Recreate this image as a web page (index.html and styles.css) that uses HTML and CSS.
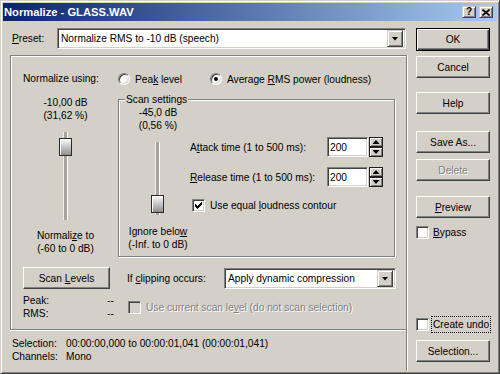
FILE: index.html
```html
<!DOCTYPE html>
<html>
<head>
<meta charset="utf-8">
<title>Normalize</title>
<link rel="stylesheet" href="styles.css">
</head>
<body>
<div class="window">
  <div class="titlebar">
    <span class="title">Normalize - GLASS.WAV</span>
    <div class="tbuttons">
      <span class="tbtn"><span class="qmark">?</span></span>
      <span class="tbtn"><svg width="8" height="7" viewBox="0 0 8 7"><path d="M0.5 0.5 L7.5 6.5 M7.5 0.5 L0.5 6.5" stroke="#000" stroke-width="1.6" fill="none"/></svg></span>
    </div>
  </div>
  <div class="body">
    <div class="main">
      <div class="preset-row">
        <span class="preset-label"><u>P</u>reset:</span>
        <div class="combo preset-combo">
          <span class="combo-text">Normalize RMS to -10 dB (speech)</span>
          <span class="ddbtn"></span>
        </div>
      </div>
      <div class="lower">
        <div class="panel">
          <div class="using-label">Normalize using:</div>
          <div class="radios">
            <div class="radio-opt first"><span class="radio"></span><span>Pea<u>k</u> level</span></div>
            <div class="radio-opt"><span class="radio on"></span><span>Average <u>R</u>MS power (loudness)</span></div>
          </div>

          <div class="level-col">
            <div>-10,00 dB</div>
            <div>(31,62 %)</div>
            <div class="slider s1"><span class="track"></span><span class="thumb t1"></span></div>
            <div class="after-slider">Normali<u>z</u>e to</div>
            <div>(-60 to 0 dB)</div>
          </div>
          <fieldset class="scan">
            <legend>Scan settings</legend>
            <div class="scan-inner">
              <div class="colA">
                <div>-45,0 dB</div>
                <div>(0,56 %)</div>
                <div class="slider s2"><span class="track"></span><span class="thumb t2"></span></div>
                <div class="after-slider">Ignore belo<u>w</u></div>
                <div>(-Inf. to 0 dB)</div>
              </div>
              <div class="colB">
                <div class="spinrow">
                  <span class="spin-label">A<u>t</u>tack time (1 to 500 ms):</span>
                  <span class="tb">200</span>
                  <span class="spin"><span class="sbtn up"></span><span class="sbtn down"></span></span>
                </div>
                <div class="spinrow second">
                  <span class="spin-label"><u>R</u>elease time (1 to 500 ms):</span>
                  <span class="tb">200</span>
                  <span class="spin"><span class="sbtn up"></span><span class="sbtn down"></span></span>
                </div>
                <div class="chk loud">
                  <span class="cb"><svg width="7" height="7" viewBox="0 0 7 7"><path d="M0 2h1v1h1v1h1V3h1V2h1V1h1V0h1v3H6v1H5v1H4v1H3v1H2V6H1V5H0z" fill="#000"/></svg></span>
                  <span>Use equal <u>l</u>oudness contour</span>
                </div>
              </div>
            </div>
          </fieldset>

          <div class="scan-btn-cell"><span class="btn scan-btn"><span>Scan <u>L</u>evels</span></span></div>
          <div class="clip-row">
            <span class="clip-label">If <u>c</u>lipping occurs:</span>
            <div class="combo clip-combo">
              <span class="combo-text">Apply dynamic compression</span>
              <span class="ddbtn"></span>
            </div>
          </div>

          <div class="levels">
            <span>Peak:</span><span>--</span>
            <span>RMS:</span><span>--</span>
          </div>
          <div class="chk disabled use-current">
            <span class="cb off"></span>
            <span>Use current scan le<u>v</u>el (do not scan selection)</span>
          </div>
        </div>
        <div class="info">
          <span>Selection:</span><span>00:00:00,000 to 00:00:01,041 (00:00:01,041)</span>
          <span>Channels:</span><span>Mono</span>
        </div>
      </div>
    </div>
    <div class="side">
      <span class="btn default"><span>OK</span></span>
      <span class="btn cancel"><span>Cancel</span></span>
      <span class="btn help"><span>Help</span></span>
      <span class="btn save"><span>Save As...</span></span>
      <span class="btn disabled delete"><span>Delete</span></span>
      <span class="btn preview"><span><u>P</u>review</span></span>
      <div class="chk bypass"><span class="cb"></span><span><u>B</u>ypass</span></div>
      <div class="chk undo"><span class="cb"></span><span class="focus">Create undo</span></div>
      <span class="btn selection"><span>Selection...</span></span>
    </div>
  </div>
</div>
</body>
</html>
```

FILE: styles.css
```css
* { box-sizing: border-box; }
html, body { margin: 0; padding: 0; }
body {
  font-family: "Liberation Sans", Arial, sans-serif;
  font-size: 10.2px;
  line-height: 13px;
  color: #000;
  background: #d4d0c8;
}
u { text-decoration: underline; text-underline-offset: 1px; }

.window {
  width: 500px;
  height: 374px;
  background: #d4d0c8;
  border: 1px solid;
  border-color: #d4d0c8 #404040 #404040 #d4d0c8;
  box-shadow: inset 1px 1px #fff, inset -1px -1px #808080;
  padding: 2px;
  display: flex;
  flex-direction: column;
}

.titlebar {
  height: 18px;
  flex: none;
  background: linear-gradient(to right, #0a246a, #a6caf0);
  display: flex;
  align-items: center;
  padding: 0 4px 0 1px;
}
.title {
  flex: 1;
  color: #fff;
  font-weight: bold;
  font-size: 11.2px;
}
.tbuttons { display: flex; gap: 3px; }
.tbtn {
  width: 14px;
  height: 12px;
  background: #d4d0c8;
  border: 1px solid;
  border-color: #d4d0c8 #404040 #404040 #d4d0c8;
  box-shadow: inset 1px 1px #fff, inset -1px -1px #808080;
  display: flex;
  align-items: center;
  justify-content: center;
}
.qmark { font-weight: bold; font-size: 10px; line-height: 10px; }

.body {
  flex: 1;
  min-height: 0;
  display: grid;
  grid-template-columns: 397px 1fr;
  grid-template-rows: 100%;
  padding: 7px 8px 0 7px;
}

.main { display: flex; flex-direction: column; min-height: 0; }
.preset-row { display: flex; align-items: center; height: 21px; flex: none; }
.preset-label { width: 47px; padding-left: 2px; }

.combo {
  height: 21px;
  background: #fff;
  border: 1px solid;
  border-color: #808080 #fff #fff #808080;
  box-shadow: inset 1px 1px #404040, inset -1px -1px #d4d0c8;
  display: flex;
  align-items: center;
  padding: 2px 2px 2px 3px;
}
.preset-combo { width: 349px; }
.combo-text { flex: 1; white-space: nowrap; overflow: hidden; }
.ddbtn {
  width: 16px;
  height: 17px;
  flex: none;
  background: #d4d0c8;
  border: 1px solid;
  border-color: #d4d0c8 #404040 #404040 #d4d0c8;
  box-shadow: inset 1px 1px #fff, inset -1px -1px #808080;
  display: flex;
  align-items: center;
  justify-content: center;
}
.ddbtn::after {
  content: "";
  width: 7px;
  height: 4px;
  background: #000;
  clip-path: polygon(0 0, 100% 0, 50% 100%);
}

.lower {
  flex: 1;
  margin-top: 6px;
  border-right: 1px solid #808080;
  box-shadow: 1px 0 #fff;
  display: flex;
  flex-direction: column;
}

.panel {
  border: 1px solid #808080;
  border-right: none;
  box-shadow: inset 1px 1px #fff, 0 1px #fff;
  padding: 16px 0 9px 12px;
  display: grid;
  grid-template-columns: 87px 278px;
  column-gap: 8px;
  align-items: start;
}

.using-label { height: 14px; }
.radios { display: flex; align-items: center; height: 14px; }
.radio-opt { display: flex; align-items: center; gap: 5px; white-space: nowrap; }
.radio-opt.first { width: 92px; }
.radio {
  width: 12px;
  height: 12px;
  flex: none;
  border-radius: 50%;
  background: #fff;
  border: 1px solid;
  border-color: #808080 #fff #fff #808080;
  box-shadow: inset 1px 1px #404040, inset -1px -1px #d4d0c8;
  display: flex;
  align-items: center;
  justify-content: center;
}
.radio.on::after {
  content: "";
  width: 4px;
  height: 4px;
  border-radius: 50%;
  background: #000;
}

.level-col {
  margin-top: 10px;
  text-align: center;
  padding-right: 2px;
}
.slider {
  position: relative;
  width: 13px;
}
.s1 { height: 88px; margin: 10px 0 0 36px; }
.s2 { height: 73px; margin: 10px 0 0 25px; }
.track {
  display: block;
  width: 5px;
  height: 100%;
  margin-left: 4px;
  background: #a6a29e;
  border-left: 1px solid #eeeeee;
  border-right: 1px solid #ffffff;
}
.thumb {
  position: absolute;
  left: 0;
  width: 13px;
  height: 18px;
  border: 1px solid #2a2a2a;
  background: linear-gradient(#fbfbfb, #8e8e8e);
  box-shadow: inset 1px 1px #fff;
}
.t1 { top: 6px; }
.t2 { bottom: 2px; }
.after-slider { margin-top: 9px; }

.scan {
  margin: 7px 0 0 0;
  padding: 0 0 5px 7px;
  min-width: 0;
  width: 277px;
  border: 1px solid #808080;
  box-shadow: inset 1px 1px #fff, 1px 1px #fff;
}
.scan legend {
  padding: 0 1px;
  margin-left: -1px;
  background: #d4d0c8;
  line-height: 13px;
}
.scan-inner { display: flex; }
.colA { width: 64px; text-align: center; flex: none; }
.colA .after-slider { margin-top: 10px; }
.colB { flex: 1; padding-top: 31px; }

.spinrow { display: flex; align-items: center; height: 20px; }
.spinrow.second { margin-top: 10px; }
.spin-label { width: 137px; white-space: nowrap; }
.tb {
  width: 41px;
  height: 20px;
  background: #fff;
  border: 1px solid;
  border-color: #808080 #fff #fff #808080;
  box-shadow: inset 1px 1px #404040, inset -1px -1px #d4d0c8;
  padding-left: 2px;
  display: flex;
  align-items: center;
}
.spin {
  width: 14px;
  height: 20px;
  margin-left: 1px;
  display: flex;
  flex-direction: column;
}
.sbtn {
  flex: 1;
  background: #d4d0c8;
  border: 1px solid #202020;
  box-shadow: inset 1px 1px #fff, inset -1px -1px #808080;
  display: flex;
  align-items: center;
  justify-content: center;
}
.sbtn::after {
  content: "";
  width: 7px;
  height: 4px;
  background: #000;
}
.sbtn.up::after { clip-path: polygon(50% 0, 100% 100%, 0 100%); }
.sbtn.down::after { clip-path: polygon(0 0, 100% 0, 50% 100%); }

.chk { display: flex; align-items: center; gap: 4px; white-space: nowrap; }
.cb {
  width: 13px;
  height: 13px;
  flex: none;
  background: #fff;
  border: 1px solid;
  border-color: #808080 #fff #fff #808080;
  box-shadow: inset 1px 1px #404040, inset -1px -1px #d4d0c8;
  display: flex;
  align-items: center;
  justify-content: center;
}
.cb svg { display: block; }
.cb.off { background: #d4d0c8; }
.loud { margin-top: 12px; margin-left: 2px; gap: 5px; }

.scan-btn-cell { margin-top: 10px; }
.clip-row {
  margin-top: 10px;
  height: 22px;
  display: flex;
  align-items: flex-end;
}
.clip-label { width: 106px; padding-left: 9px; align-self: center; white-space: nowrap; }
.clip-combo { width: 172px; }

.levels {
  margin-top: 5px;
  display: grid;
  grid-template-columns: 84px 12px;
  white-space: nowrap;
}
.use-current {
  margin-top: 5px;
  height: 26px;
  padding-left: 10px;
  gap: 5px;
}
.disabled { color: #808080; text-shadow: 1px 1px 0 #fff; }

.info {
  margin-top: 7px;
  padding-left: 2px;
  display: grid;
  grid-template-columns: 54px auto;
  white-space: nowrap;
}

.side {
  display: flex;
  flex-direction: column;
  padding: 0 0 9px 9px;
  min-height: 0;
}
.btn {
  height: 22px;
  flex: none;
  background: #d4d0c8;
  border: 1px solid;
  border-color: #fff #404040 #404040 #fff;
  box-shadow: inset -1px -1px #808080;
  display: flex;
  align-items: center;
  justify-content: center;
  white-space: nowrap;
}
.btn.default {
  height: 23px;
  border: 1px solid #000;
  box-shadow: inset 1px 1px #fff, inset -1px -1px #404040, inset -2px -2px #808080;
}
.scan-btn { width: 87px; }
.cancel { margin-top: 5px; }
.help { margin-top: 14px; }
.save { margin-top: 17px; }
.delete { margin-top: 6px; }
.preview { margin-top: 15px; }
.bypass { margin-top: 8px; }
.undo { margin-top: auto; gap: 3px; }
.focus { outline: 1px dotted #000; outline-offset: 0; padding: 1px 1px; line-height: 13px; }
.selection { margin-top: 8px; }
```
